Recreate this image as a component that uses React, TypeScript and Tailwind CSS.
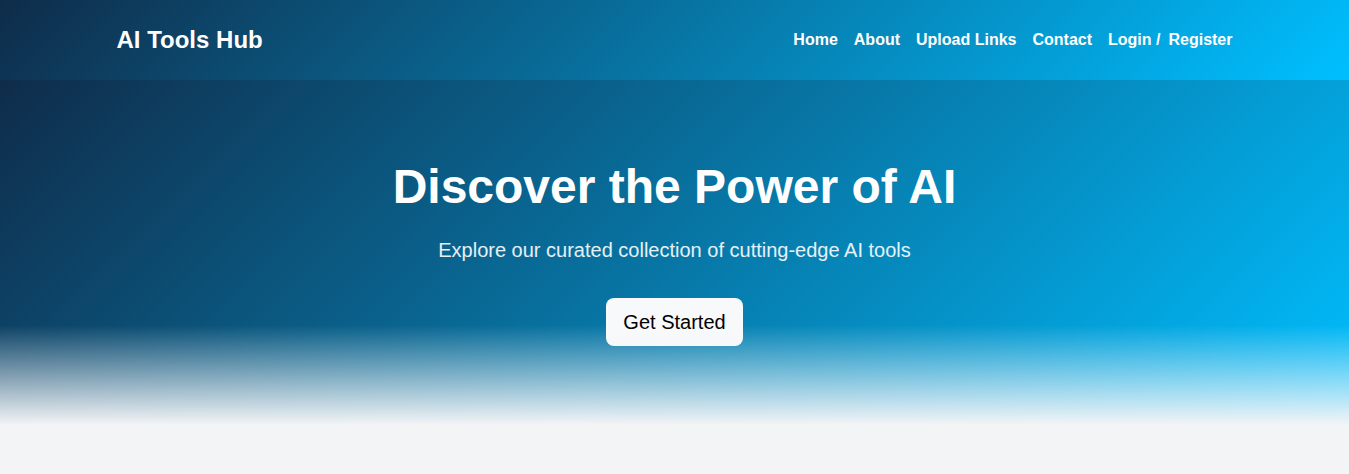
import React from 'react';

const navLinks = ['Home', 'About', 'Upload Links', 'Contact'];

function Header() {
  return (
    <header className="h-20 bg-[linear-gradient(135deg,#0f2c4a,#00bfff)]">
      <div className="mx-auto flex h-full max-w-[1140px] items-center justify-between px-3">
        <a href="#" className="text-2xl font-bold text-white">
          AI Tools Hub
        </a>
        <nav className="flex items-center gap-4 text-base font-bold text-white">
          {navLinks.map((link) => (
            <a key={link} href="#">
              {link}
            </a>
          ))}
          <div className="flex items-center gap-2">
            <a href="#">Login /</a>
            <a href="#">Register</a>
          </div>
        </nav>
      </div>
    </header>
  );
}

function Hero() {
  return (
    <section className="relative h-[345px] bg-[linear-gradient(135deg,#0f2c4a,#00bfff)]">
      <div className="flex flex-col items-center pt-[78px] text-center">
        <h1 className="text-5xl leading-[1.2] font-bold text-white">Discover the Power of AI</h1>
        <p className="mt-[19px] text-xl leading-[30px] text-white/90">
          Explore our curated collection of cutting-edge AI tools
        </p>
        <button className="mt-[33px] flex h-12 items-center rounded-lg bg-[#f8f9fa] px-[17px] text-xl text-black">
          Get Started
        </button>
      </div>
      {/* fade into the page */}
      <div className="absolute inset-x-0 bottom-0 h-[100px] bg-gradient-to-b from-transparent to-[#f3f4f6]" />
    </section>
  );
}

export default function App() {
  return (
    <div className="min-h-screen bg-[#f3f4f6] font-['Liberation_Sans',Arial,sans-serif]">
      <Header />
      <Hero />
    </div>
  );
}
